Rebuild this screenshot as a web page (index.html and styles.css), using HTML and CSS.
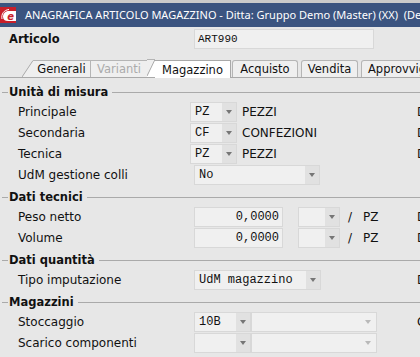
FILE: index.html
```html
<!DOCTYPE html>
<html lang="it">
<head>
    <meta charset="UTF-8">
    <meta name="viewport" content="width=device-width, initial-scale=1.0">
    <title>Anagrafica articolo magazzino</title>
    <link rel="stylesheet" href="styles.css">
</head>
<body>
    <div class="topstrip"></div>
    <div class="titlebar">
        <svg class="appicon" width="16" height="16" viewBox="0 0 16 16">
            <rect width="16" height="16" fill="#c91f2a"/>
            <path d="M16 4 H9 C5 4 3 6.5 3 9.5 C3 12.5 5 14 8 14 H16 Z" fill="#fff"/>
            <path d="M2 12 C1 7 4 3 9 2.5" stroke="#fff" stroke-width="1" fill="none"/>
            <text x="7.2" y="12.6" font-family="DejaVu Sans" font-size="10" font-style="italic" font-weight="bold" fill="#c91f2a">e</text>
        </svg>
        <span class="title">ANAGRAFICA ARTICOLO MAGAZZINO - Ditta: Gruppo Demo (Master) (XX)  (Demo)</span>
    </div>

    <div class="header">
        <span class="hlabel">Articolo</span>
        <div class="fld art">ART990</div>
    </div>

    <div class="tabs">
        <span class="lead"></span>
        <svg class="slant" width="11" height="17" viewBox="0 0 11 17">
            <polygon points="0,17 11,0 11,17" fill="#efefef"/>
            <line x1="0" y1="17" x2="11" y2="0.5" stroke="#a9a9a9"/>
        </svg>
        <span class="tab first">Generali</span>
        <span class="tab off">Varianti</span>
        <svg class="slant" width="8" height="18" viewBox="0 0 8 18">
            <polygon points="0,0 8,0 0,17" fill="#efefef"/>
            <polygon points="0,18 0,17 8,0 8,18" fill="#fff"/>
            <line x1="0" y1="0.5" x2="8" y2="0.5" stroke="#b5b5b5"/>
            <line x1="0" y1="17" x2="8" y2="0.5" stroke="#a9a9a9"/>
        </svg>
        <span class="tab on">Magazzino</span>
        <span class="tab round acq">Acquisto</span>
        <span class="tab round ven">Vendita</span>
        <span class="tab round app">Approvvigionamento</span>
    </div>

    <div class="panel">
        <div class="sec">Unità di misura</div>
        <div class="row">
            <span class="lbl">Principale</span>
            <div class="ctl"><div class="fld combo w47"><span>PZ</span><i class="arr"></i></div><span class="desc">PEZZI</span></div>
            <span class="cut">Descrizione</span>
        </div>
        <div class="row">
            <span class="lbl">Secondaria</span>
            <div class="ctl"><div class="fld combo w47"><span>CF</span><i class="arr"></i></div><span class="desc">CONFEZIONI</span></div>
            <span class="cut">Descrizione</span>
        </div>
        <div class="row">
            <span class="lbl">Tecnica</span>
            <div class="ctl"><div class="fld combo w47"><span>PZ</span><i class="arr"></i></div><span class="desc">PEZZI</span></div>
            <span class="cut">Descrizione</span>
        </div>
        <div class="row">
            <span class="lbl">UdM gestione colli</span>
            <div class="ctl ind"><div class="fld combo w126"><span>No</span><i class="arr"></i></div></div>
        </div>

        <div class="sec">Dati tecnici</div>
        <div class="row">
            <span class="lbl">Peso netto</span>
            <div class="ctl ind"><div class="fld num">0,0000</div><div class="fld combo w42"><span></span><i class="arr"></i></div><span class="per">/</span><span class="unit">PZ</span></div>
            <span class="cut">Descrizione</span>
        </div>
        <div class="row">
            <span class="lbl">Volume</span>
            <div class="ctl ind"><div class="fld num">0,0000</div><div class="fld combo w42"><span></span><i class="arr"></i></div><span class="per">/</span><span class="unit">PZ</span></div>
            <span class="cut">Descrizione</span>
        </div>

        <div class="sec">Dati quantità</div>
        <div class="row">
            <span class="lbl">Tipo imputazione</span>
            <div class="ctl ind"><div class="fld combo w127"><span>UdM magazzino</span><i class="arr"></i></div></div>
            <span class="cut">Descrizione</span>
        </div>

        <div class="sec">Magazzini</div>
        <div class="row">
            <span class="lbl">Stoccaggio</span>
            <div class="ctl ind"><div class="fld combo w57"><span>10B</span><i class="arr"></i></div><div class="fld combo w126"><span></span><i class="arr off"></i></div></div>
            <span class="cut">Carico</span>
        </div>
        <div class="row">
            <span class="lbl">Scarico componenti</span>
            <div class="ctl ind"><div class="fld combo w57"><span></span><i class="arr"></i></div><div class="fld combo w126"><span></span><i class="arr off"></i></div></div>
        </div>
    </div>
</body>
</html>
```

FILE: styles.css
```css
body {margin:0; width:420px; height:357px; overflow:hidden; background:#e7e7e7; color:#111; font-family:"DejaVu Sans", sans-serif; font-size:12px}

.topstrip {height:3px; background:#cbcbcb}
.titlebar {height:24px; background:#3b5480; color:#fff; display:flex; align-items:flex-start; white-space:pre; overflow:hidden}
.appicon {display:block; margin:4px 9px 0 0; flex:none}
.title {font-family:"Noto Sans", sans-serif; font-size:11px; line-height:23px}

.header {display:flex; align-items:center; padding:2px 0 11px 9px}
.hlabel {width:185px; font-weight:bold; font-size:11.5px}

.fld {height:20px; box-sizing:border-box; border:1px solid #d8d8d8; background:#f0f0f0; display:flex; align-items:center; font-family:"Liberation Mono", monospace; font-size:12px; white-space:pre; flex:none}
.art {width:180px; padding-left:3px; font-size:11px}

/* tabs */
.tabs {display:flex; align-items:flex-end; height:18px; box-sizing:border-box; border-bottom:1px solid #a9a9a9; font-size:11.5px; white-space:nowrap}
.lead {width:22px; flex:none}
.slant {display:block; flex:none}
.tab {height:17px; box-sizing:border-box; display:flex; align-items:center; justify-content:center; background:#efefef; border:1px solid #b5b5b5; border-bottom:none; flex:none}
.tab.first {width:58px; border-left:none}
.tab.off {width:56px; border-left:none; border-right:none; color:#ababab}
.tab.on {width:76px; height:18px; margin-bottom:-1px; background:#fff; border-left:none; border-color:#a9a9a9}
.tab.round {border-radius:3px 3px 0 0}
.acq {width:66px; margin-left:1px}
.ven {width:57px; margin-left:3px}
.app {width:120px; margin-left:3px; justify-content:flex-start; padding-left:6px}

/* panel */
.panel {padding-top:3px}
.sec {display:flex; align-items:center; height:18px; margin:2px 0 1px; padding-left:2px; font-weight:bold; font-size:11.5px; white-space:nowrap}
.sec::before {content:""; width:6px; border-top:1px solid #aaa; margin-right:1px}
.sec::after {content:""; flex:1; border-top:1px solid #aaa; margin-left:4px}

.row {display:grid; grid-template-columns:172px 226px 80px; height:21px; padding-left:18px; white-space:nowrap}
.lbl {line-height:21px}
.ctl {display:flex; align-items:center; height:20px}
.ctl.ind {margin-left:4px}
.cut {line-height:21px; margin-left:1px}

.combo {justify-content:space-between; padding-left:4px}
.arr {width:14px; height:18px; background:#e1e1e1; display:flex; align-items:center; justify-content:center}
.arr::after {content:""; border-top:4px solid #767676; border-left:3px solid transparent; border-right:3px solid transparent}
.arr.off {background:none; margin-right:1px}
.arr.off::after {border-top-color:#b9b9b9}

.w47 {width:47px}
.w42 {width:42px; margin-left:15px}
.w57 {width:57px}
.w126 {width:126px}
.w127 {width:127px}
.num {width:89px; justify-content:flex-end; padding-right:3px}
.desc {margin-left:5px}
.per {margin-left:8px}
.unit {margin-left:11px}
```
